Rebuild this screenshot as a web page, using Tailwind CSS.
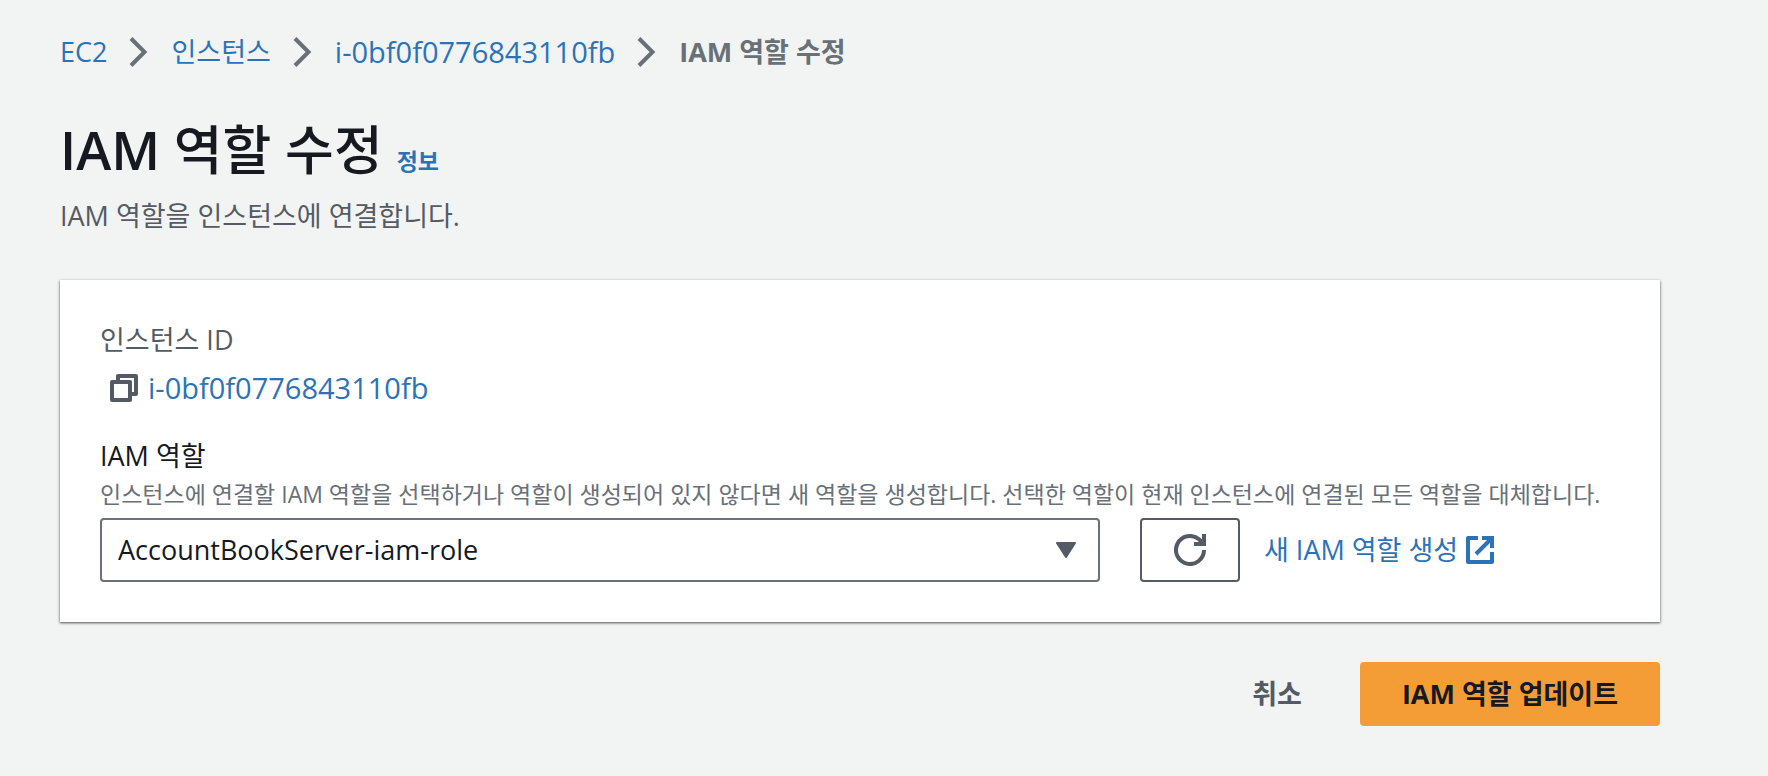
<!DOCTYPE html>
<html lang="ko">
<head>
<meta charset="utf-8">
<meta name="viewport" content="width=device-width, initial-scale=1">
<title>IAM 역할 수정</title>
<script src="https://cdn.jsdelivr.net/npm/@tailwindcss/browser@4"></script>
</head>
<body class="min-h-screen bg-[#f2f4f3] pt-8 pr-27 pb-12 pl-15 font-['Open_Sans','Noto_Sans_CJK_KR',sans-serif] text-[27px] leading-10 text-[#16191f]">
  <nav aria-label="탐색 경로">
    <ol class="flex flex-wrap items-center gap-5.5 text-[#2b73b9]">
      <li class="flex items-center gap-5.5"><a href="#">EC2</a>
        <svg class="h-8 w-5" viewBox="0 0 20 32" fill="none" stroke="#687078" stroke-width="4" aria-hidden="true"><path d="M2 2.5 L15.5 16 L2 29.500"/></svg></li>
      <li class="flex items-center gap-5.5"><a href="#">인스턴스</a>
        <svg class="h-8 w-5" viewBox="0 0 20 32" fill="none" stroke="#687078" stroke-width="4" aria-hidden="true"><path d="M2 2.5 L15.5 16 L2 29.500"/></svg></li>
      <li class="flex items-center gap-5.5"><a href="#" class="text-[29px]">i-0bf0f0776843110fb</a>
        <svg class="h-8 w-5" viewBox="0 0 20 32" fill="none" stroke="#687078" stroke-width="4" aria-hidden="true"><path d="M2 2.5 L15.5 16 L2 29.500"/></svg></li>
      <li class="font-bold text-[#687078]" aria-current="page">IAM 역할 수정</li>
    </ol>
  </nav>

  <header class="mt-10.5">
    <div class="flex items-baseline gap-3.5">
      <h1 class="text-[53px] leading-18 font-medium"><span class="font-semibold">IAM</span> 역할 수정</h1>
      <a href="#" class="text-[23px] font-bold text-[#2b73b9]">정보</a>
    </div>
    <p class="mt-2.5 text-[#545b64]">IAM 역할을 인스턴스에 연결합니다.</p>
  </header>

  <main class="mt-11">
    <form>
      <section class="bg-white p-10 shadow-[0_1px_2px_0_#4b565fcc,1px_1px_3px_0_#00000026,-1px_1px_3px_0_#00000026]">
        <dl>
          <dt class="text-[#545b64]">인스턴스 ID</dt>
          <dd class="mt-2 flex items-center gap-2.5 pl-2.5">
            <button type="button" aria-label="복사" class="text-[#545b64]">
              <svg class="size-7" viewBox="0 0 28 28" fill="none" stroke="currentColor" stroke-width="4" stroke-linejoin="round" aria-hidden="true"><path d="M2 8h18v18H2z"/><path d="M8 8V2h18v18h-6"/></svg>
            </button>
            <a href="#" class="text-[29px] text-[#2b73b9]">i-0bf0f0776843110fb</a>
          </dd>
        </dl>
        <label for="role" class="mt-7 block">IAM 역할</label>
        <p id="role-hint" class="text-[23px] leading-9 text-[#687078]">인스턴스에 연결할 IAM 역할을 선택하거나 역할이 생성되어 있지 않다면 새 역할을 생성합니다. 선택한 역할이 현재 인스턴스에 연결된 모든 역할을 대체합니다.</p>
        <div class="mt-1.5 flex items-center">
          <div class="relative max-w-[1000px] flex-1">
            <select id="role" aria-describedby="role-hint" class="block h-16 w-full appearance-none rounded-sm border-2 border-[#687078] bg-white pr-14 pl-4">
              <option>AccountBookServer-iam-role</option>
            </select>
            <svg class="pointer-events-none absolute top-6 right-6 h-4 w-5" viewBox="0 0 20 16" fill="#545b64" stroke="#545b64" stroke-width="2" stroke-linejoin="round" aria-hidden="true"><path d="M1 1h18L10 15z"/></svg>
          </div>
          <button type="button" aria-label="새로 고침" class="ml-10 flex h-16 w-25 items-center justify-center rounded-sm border-2 border-[#545b64] bg-white text-[#545b64]">
            <svg class="size-8" viewBox="0 0 32 32" fill="none" stroke="currentColor" stroke-width="4" aria-hidden="true"><path d="M30 16a14 14 0 1 1-5-10.700L30 10"/><path d="M30 0v10H20"/></svg>
          </button>
          <a href="#" class="ml-6 flex items-center gap-2 text-[#2b73b9]">새 IAM 역할 생성
            <svg class="size-7" viewBox="0 0 28 28" fill="none" stroke="currentColor" stroke-width="4" aria-hidden="true"><path d="M12 2H2v24h24V16" stroke-linejoin="round"/><path d="M16 2h10v10M26 2L10 18"/></svg>
          </a>
        </div>
      </section>
      <div class="mt-10 flex justify-end gap-4">
        <button type="button" class="h-16 px-10.5 font-bold text-[#545b64]">취소</button>
        <button type="submit" class="h-16 rounded-sm bg-[#f49d37] px-10.5 font-bold">IAM 역할 업데이트</button>
      </div>
    </form>
  </main>
</body>
</html>
